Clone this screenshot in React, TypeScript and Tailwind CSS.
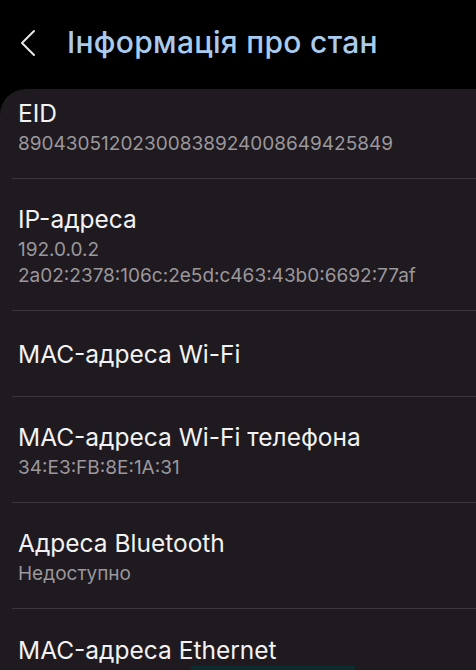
import React from "react";

type Row = { title: string; values?: string[] };

const rows: Row[] = [
  { title: "EID", values: ["89043051202300838924008649425849"] },
  { title: "IP-адреса", values: ["192.0.0.2", "2a02:2378:106c:2e5d:c463:43b0:6692:77af"] },
  { title: "MAC-адреса Wi-Fi" },
  { title: "MAC-адреса Wi-Fi телефона", values: ["34:E3:FB:8E:1A:31"] },
  { title: "Адреса Bluetooth", values: ["Недоступно"] },
  { title: "MAC-адреса Ethernet" },
];

function BackIcon() {
  return (
    <svg width="18" height="28" viewBox="0 0 18 28" fill="none">
      <path d="M15 2 L3 14 L15 26" stroke="#e6e6e6" strokeWidth="2" strokeLinecap="round" strokeLinejoin="round" />
    </svg>
  );
}

export default function App() {
  const last = rows.length - 1;
  return (
    <div
      className="w-[476px] h-[670px] overflow-hidden bg-black flex flex-col"
      style={{ fontFamily: "Inter, 'Noto Sans', sans-serif" }}
    >
      {/* Шапка */}
      <div className="h-[89px] shrink-0 flex items-center pl-[19px] pb-[4px]">
        <BackIcon />
        <span className="ml-[30px] text-[30px] font-medium text-[#a8cbee] tracking-[0.3px]">
          Інформація про стан
        </span>
      </div>

      {/* Список */}
      <div className="flex-1 bg-[#1e1a1f] rounded-tl-[26px] pl-[12px]">
        {rows.map((r, i) => {
          const pad =
            i === 0
              ? "pt-[8px] pb-[21px]"
              : r.values
                ? "pt-[24px] pb-[21px]"
                : i === last
                  ? "pt-[25px] pb-0"
                  : "pt-[27px] pb-[26px]";
          return (
            <div key={r.title} className={i > 0 ? "border-t border-[#3a363b]" : ""}>
              <div className={`pl-[6px] ${pad}`}>
                <div className="text-[24.5px] leading-[32px] text-[#f2f2f2]">{r.title}</div>
                {r.values && (
                  <div className="mt-[2px]">
                    {r.values.map((v) => (
                      <div key={v} className="text-[19px] leading-[26px] text-[#9b979c]">
                        {v}
                      </div>
                    ))}
                  </div>
                )}
              </div>
            </div>
          );
        })}
        <div className="ml-[179px] w-[164px] h-[8px] bg-[#0f2a2c]" />
      </div>
    </div>
  );
}
